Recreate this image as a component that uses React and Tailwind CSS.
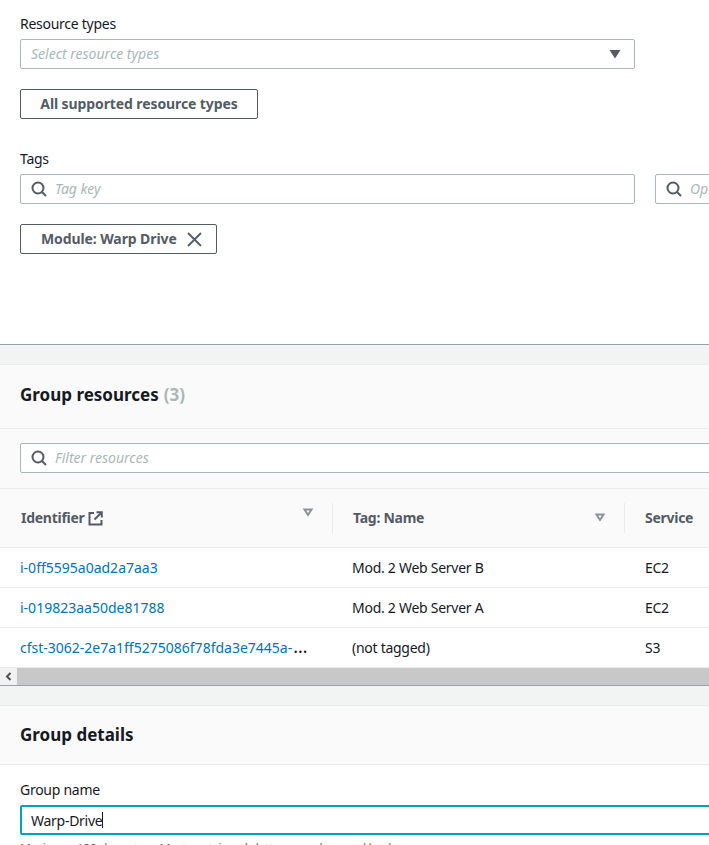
const font = "font-['Noto_Sans','Open_Sans',sans-serif]";

function SearchIcon() {
    return (
        <svg width="16" height="16" viewBox="0 0 16 16" fill="none" stroke="#545b64" strokeWidth="2" className="shrink-0">
            <circle cx="7" cy="7" r="5.5" />
            <path d="M11 11l4 4" />
        </svg>
    );
}

function SortIcon() {
    return (
        <svg width="10" height="9" viewBox="0 0 10 9" fill="none" stroke="#879596" strokeWidth="2">
            <path d="M1.5 1.5h7L5 7z" />
        </svg>
    );
}

function ExternalIcon() {
    return (
        <svg width="15" height="15" viewBox="0 0 15 15" fill="none" stroke="#545b64" strokeWidth="2" className="shrink-0">
            <path d="M6 2H1.5v11.5h12V9" />
            <path d="M8.5 1.2h5.3v5.3" />
            <path d="M13.5 1.5L6.5 8.5" />
        </svg>
    );
}

function SearchBox({ placeholder, className }) {
    return (
        <div className={`flex h-[30px] items-center gap-2 rounded-[2px] border border-[#aab7b8] bg-white pl-[10px] ${className}`}>
            <SearchIcon />
            <span className="whitespace-nowrap pb-px text-[14px] italic tracking-normal text-[#aab7b8]">{placeholder}</span>
        </div>
    );
}

function OutlineButton({ children, className }) {
    return (
        <div className={`flex h-[30px] items-center rounded-[2px] border border-[#545b64] bg-white pb-px text-[14px] font-bold tracking-[-0.1px] text-[#545b64] ${className}`}>
            {children}
        </div>
    );
}

const rows = [
    { id: 'i-0ff5595a0ad2a7aa3', name: 'Mod. 2 Web Server B', service: 'EC2' },
    { id: 'i-019823aa50de81788', name: 'Mod. 2 Web Server A', service: 'EC2' },
    { id: 'cfst-3062-2e7a1ff5275086f78fda3e7445a-', name: '(not tagged)', service: 'S3', more: true },
];

export default function App() {
    return (
        <div className={`h-[845px] w-[709px] overflow-hidden bg-[#f2f3f3] ${font} text-[14px] tracking-[-0.27px] text-[#16191f]`}>
            {/* Query card */}
            <div className="h-[345px] border-b border-[#95a5a6] bg-white px-5 pt-[14px]">
                <div className="h-[25px] leading-[20px]">Resource types</div>
                <div className="flex h-[30px] w-[615px] items-center justify-between rounded-[2px] border border-[#aab7b8] pl-[10px] pr-[13px]">
                    <span className="pb-px italic tracking-normal text-[#aab7b8]">Select resource types</span>
                    <svg width="12" height="10" viewBox="0 0 12 10" fill="#545b64">
                        <path d="M0.5 1h11L6 9.5z" />
                    </svg>
                </div>
                <OutlineButton className="mt-5 w-[238px] justify-center">All supported resource types</OutlineButton>
                <div className="mt-[30px] h-[25px] leading-[20px]">Tags</div>
                <div className="flex w-[800px] gap-5">
                    <SearchBox placeholder="Tag key" className="w-[615px] shrink-0" />
                    <SearchBox placeholder="Optional tag value" className="w-[165px] shrink-0" />
                </div>
                <OutlineButton className="mt-5 w-[197px] pl-5">
                    <span>Module: Warp Drive</span>
                    <svg width="15" height="15" viewBox="0 0 15 15" fill="none" stroke="#545b64" strokeWidth="1.8" className="ml-[10px] mt-px">
                        <path d="M1 1l13 13M14 1L1 14" />
                    </svg>
                </OutlineButton>
            </div>

            {/* Group resources */}
            <div className="mt-[19px] border-t border-[#eaeded] bg-[#fafafa]">
                <div className="flex h-[64px] items-center border-b border-[#eaeded] px-5 pb-[3px] text-[17px] font-bold tracking-normal">
                    <span>Group resources</span>
                    <span className="ml-[5px] text-[#aab7b8]">(3)</span>
                </div>
                <div className="flex h-[60px] items-center border-b border-[#eaeded] pb-px pl-5">
                    <SearchBox placeholder="Filter resources" className="w-[720px] shrink-0" />
                </div>
                <div className="flex h-[59px] items-center border-b border-[#eaeded] font-bold text-[#545b64]">
                    <div className="flex h-[30px] w-[333px] shrink-0 items-center border-r border-[#eaeded] pb-px pl-[21px] pr-[19px]">
                        <span>Identifier</span>
                        <span className="ml-[3px] mt-px"><ExternalIcon /></span>
                        <span className="mb-[10px] ml-auto"><SortIcon /></span>
                    </div>
                    <div className="flex h-[30px] w-[292px] shrink-0 items-center justify-between border-r border-[#eaeded] pb-px pl-5 pr-[19px]">
                        <span>Tag: Name</span>
                        <SortIcon />
                    </div>
                    <div className="pb-px pl-5">Service</div>
                </div>
                {rows.map((row) => (
                    <div key={row.id} className="flex h-10 items-center border-b border-[#eaeded] bg-white pb-px">
                        <div className="flex w-[333px] shrink-0 items-baseline whitespace-nowrap pl-5 tracking-normal">
                            <span className="text-[#0073bb]">{row.id}</span>
                            {row.more && <span className="ml-px text-[18px] leading-none">…</span>}
                        </div>
                        <div className="w-[292px] shrink-0 pl-[19px]">{row.name}</div>
                        <div className="pl-5">{row.service}</div>
                    </div>
                ))}
                {/* Horizontal scrollbar */}
                <div className="flex h-[18px] border-b border-[#95a5a6] bg-[#c8c8c8]">
                    <div className="flex w-[17px] items-center justify-center bg-[#f1f1f1]">
                        <svg width="7" height="9" viewBox="0 0 7 9" fill="none" stroke="#505050" strokeWidth="2">
                            <path d="M5.5 1L2 4.5 5.5 8" />
                        </svg>
                    </div>
                </div>
            </div>

            {/* Group details */}
            <div className="mt-[19px] border-t border-[#eaeded] bg-white">
                <div className="flex h-[59px] items-center border-b border-[#eaeded] bg-[#fafafa] px-5 text-[17px] font-bold tracking-normal">
                    Group details
                </div>
                <div className="pl-5 pt-[15px]">
                    <div className="h-[25px] leading-[20px]">Group name</div>
                    <div className="flex h-[30px] w-[720px] items-center rounded-[2px] border-2 border-[#00a1c9] pl-[9px]">
                        <span>Warp-Drive</span>
                        <span className="h-[16px] w-px bg-[#16191f]" />
                    </div>
                    <div className="mt-[5px] whitespace-nowrap text-[12px] tracking-[-0.4px] text-[#687078]">
                        Maximum 128 characters. Must contain only letters, numbers and hyphens.
                    </div>
                </div>
            </div>
        </div>
    );
}
